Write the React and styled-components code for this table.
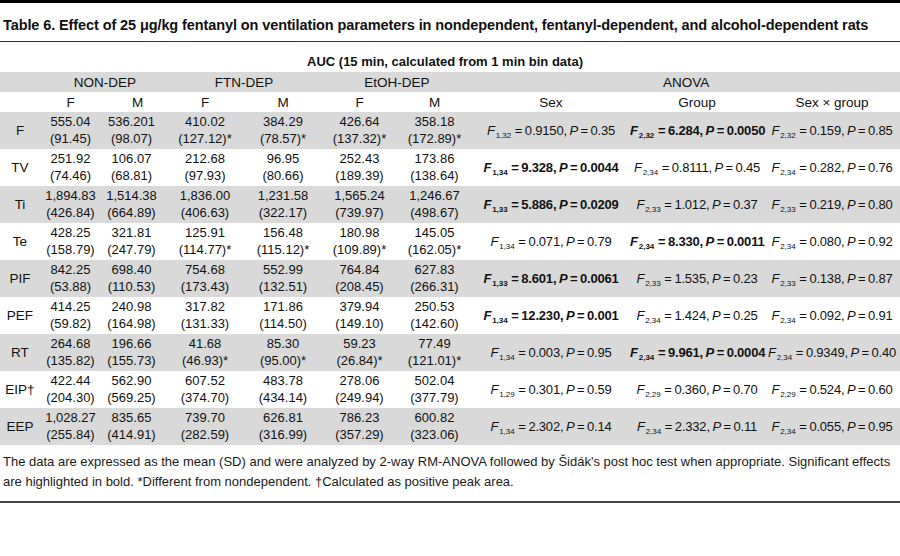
import React from 'react';
import styled, { createGlobalStyle } from 'styled-components';

const GlobalStyle = createGlobalStyle`
  body {
    margin: 0;
    background: #fff;
    color: #111;
    font-family: "Liberation Sans", Arial, sans-serif;
  }
`;

const widths = [44, 53, 69, 78, 78, 75, 75, 158, 134, 136];

const rows = [
  { label: 'F', vals: [['555.04', '(91.45)'], ['536.201', '(98.07)'], ['410.02', '(127.12)*'], ['384.29', '(78.57)*'], ['426.64', '(137.32)*'], ['358.18', '(172.89)*']],
    stats: [['1,32', '0.9150', '0.35'], ['2,32', '6.284', '0.0050', true], ['2,32', '0.159', '0.85']] },
  { label: 'TV', vals: [['251.92', '(74.46)'], ['106.07', '(68.81)'], ['212.68', '(97.93)'], ['96.95', '(80.66)'], ['252.43', '(189.39)'], ['173.86', '(138.64)']],
    stats: [['1,34', '9.328', '0.0044', true], ['2,34', '0.8111', '0.45'], ['2,34', '0.282', '0.76']] },
  { label: 'Ti', vals: [['1,894.83', '(426.84)'], ['1,514.38', '(664.89)'], ['1,836.00', '(406.63)'], ['1,231.58', '(322.17)'], ['1,565.24', '(739.97)'], ['1,246.67', '(498.67)']],
    stats: [['1,33', '5.886', '0.0209', true], ['2,33', '1.012', '0.37'], ['2,33', '0.219', '0.80']] },
  { label: 'Te', vals: [['428.25', '(158.79)'], ['321.81', '(247.79)'], ['125.91', '(114.77)*'], ['156.48', '(115.12)*'], ['180.98', '(109.89)*'], ['145.05', '(162.05)*']],
    stats: [['1,34', '0.071', '0.79'], ['2,34', '8.330', '0.0011', true], ['2,34', '0.080', '0.92']] },
  { label: 'PIF', vals: [['842.25', '(53.88)'], ['698.40', '(110.53)'], ['754.68', '(173.43)'], ['552.99', '(132.51)'], ['764.84', '(208.45)'], ['627.83', '(266.31)']],
    stats: [['1,33', '8.601', '0.0061', true], ['2,33', '1.535', '0.23'], ['2,33', '0.138', '0.87']] },
  { label: 'PEF', vals: [['414.25', '(59.82)'], ['240.98', '(164.98)'], ['317.82', '(131.33)'], ['171.86', '(114.50)'], ['379.94', '(149.10)'], ['250.53', '(142.60)']],
    stats: [['1,34', '12.230', '0.001', true], ['2,34', '1.424', '0.25'], ['2,34', '0.092', '0.91']] },
  { label: 'RT', vals: [['264.68', '(135.82)'], ['196.66', '(155.73)'], ['41.68', '(46.93)*'], ['85.30', '(95.00)*'], ['59.23', '(26.84)*'], ['77.49', '(121.01)*']],
    stats: [['1,34', '0.003', '0.95'], ['2,34', '9.961', '0.0004', true], ['2,34', '0.9349', '0.40']] },
  { label: 'EIP†', vals: [['422.44', '(204.30)'], ['562.90', '(569.25)'], ['607.52', '(374.70)'], ['483.78', '(434.14)'], ['278.06', '(249.94)'], ['502.04', '(377.79)']],
    stats: [['1,29', '0.301', '0.59'], ['2,29', '0.360', '0.70'], ['2,29', '0.524', '0.60']] },
  { label: 'EEP', vals: [['1,028.27', '(255.84)'], ['835.65', '(414.91)'], ['739.70', '(282.59)'], ['626.81', '(316.99)'], ['786.23', '(357.29)'], ['600.82', '(323.06)']],
    stats: [['1,34', '2.302', '0.14'], ['2,34', '2.332', '0.11'], ['2,34', '0.055', '0.95']] },
];

const Stat = ({ df, f, p, bold }) => (
  <StatText $bold={bold}>
    <i>F</i><Sub>{df}</Sub> = {f}, <i>P</i> = {p}
  </StatText>
);

const App = () => {
  return (
    <Page>
      <GlobalStyle />
      <Title>
        Table 6. Effect of 25 μg/kg fentanyl on ventilation parameters in nondependent, fentanyl-dependent, and alcohol-dependent rats
      </Title>
      <Table>
        <colgroup>
          {widths.map((w, i) => <col key={i} style={{ width: w }} />)}
        </colgroup>
        <thead>
          <tr>
            <AucCell colSpan={10}>AUC (15 min, calculated from 1 min bin data)</AucCell>
          </tr>
          <Row $shade>
            <HeadCell />
            <HeadCell colSpan={2}>NON-DEP</HeadCell>
            <HeadCell colSpan={2}>FTN-DEP</HeadCell>
            <HeadCell colSpan={2}>EtOH-DEP</HeadCell>
            <HeadCell colSpan={3}>ANOVA</HeadCell>
          </Row>
          <Row>
            <HeadCell />
            <HeadCell>F</HeadCell>
            <HeadCell $shift={6}>M</HeadCell>
            <HeadCell>F</HeadCell>
            <HeadCell>M</HeadCell>
            <HeadCell>F</HeadCell>
            <HeadCell>M</HeadCell>
            <HeadCell>Sex</HeadCell>
            <HeadCell>Group</HeadCell>
            <HeadCell>Sex × group</HeadCell>
          </Row>
        </thead>
        <tbody>
          {rows.map((r, i) => (
            <Row key={r.label} $shade={i % 2 === 0}>
              <LabelCell>{r.label}</LabelCell>
              {r.vals.map((v, j) => (
                <ValueCell key={j}>
                  {v[0]}
                  <br />
                  {v[1]}
                </ValueCell>
              ))}
              {r.stats.map((s, j) => (
                <StatCell key={j}>
                  <Stat df={s[0]} f={s[1]} p={s[2]} bold={s[3]} />
                </StatCell>
              ))}
            </Row>
          ))}
        </tbody>
      </Table>
      <Footnote>
        The data are expressed as the mean (SD) and were analyzed by 2-way RM-ANOVA followed by Šidák's post hoc test when appropriate. Significant effects
        <br />
        are highlighted in bold. *Different from nondependent. †Calculated as positive peak area.
      </Footnote>
      <BottomRule />
    </Page>
  );
};

export default App;

const Page = styled.div`
  width: 900px;
  border-top: 3px solid #000;
`;

const Title = styled.h1`
  margin: 0;
  height: 39px;
  box-sizing: border-box;
  padding: 14px 0 0 3px;
  border-bottom: 1px solid #333;
  font-size: 14.5px;
  line-height: 17px;
  font-weight: bold;
  letter-spacing: -0.1px;
  white-space: nowrap;
  color: #111;
`;

const Table = styled.table`
  width: 900px;
  table-layout: fixed;
  border-collapse: collapse;
  margin-top: 9px;
  font-size: 13px;
  color: #111;
`;

const Row = styled.tr`
  background: ${p => (p.$shade ? '#d9d9d9' : '#fff')};
`;

const AucCell = styled.th`
  height: 21px;
  padding: 0 10px 0 0;
  text-align: center;
  font-weight: bold;
  font-size: 13px;
  line-height: 21px;
`;

const HeadCell = styled.th`
  height: 20px;
  padding: 0 0 0 ${p => (p.$shift || 0) * 2}px;
  font-weight: normal;
  text-align: center;
  line-height: 19px;
  font-size: 13.5px;
`;

const LabelCell = styled.td`
  padding: 0 4px 0 0;
  text-align: center;
  font-size: 13.5px;
`;

const ValueCell = styled.td`
  padding: 1px 0 2px;
  text-align: center;
  line-height: 17px;
  font-size: 13px;
  white-space: nowrap;
`;

const StatCell = styled.td`
  padding: 0;
  text-align: center;
  white-space: nowrap;
`;

const StatText = styled.span`
  font-size: 13px;
  font-weight: ${p => (p.$bold ? 'bold' : 'normal')};
  word-spacing: -0.8px;
  letter-spacing: -0.2px;
`;

const Sub = styled.sub`
  font-size: 8px;
  vertical-align: -3px;
  line-height: 0;
  letter-spacing: 0;
  margin: 0 1px 0 1px;
`;

const Footnote = styled.p`
  margin: 7px 0 0;
  padding-left: 3px;
  font-size: 13px;
  line-height: 20px;
  color: #1a1a1a;
  white-space: nowrap;
`;

const BottomRule = styled.div`
  margin-top: 9px;
  height: 2px;
  background: #444;
`;
